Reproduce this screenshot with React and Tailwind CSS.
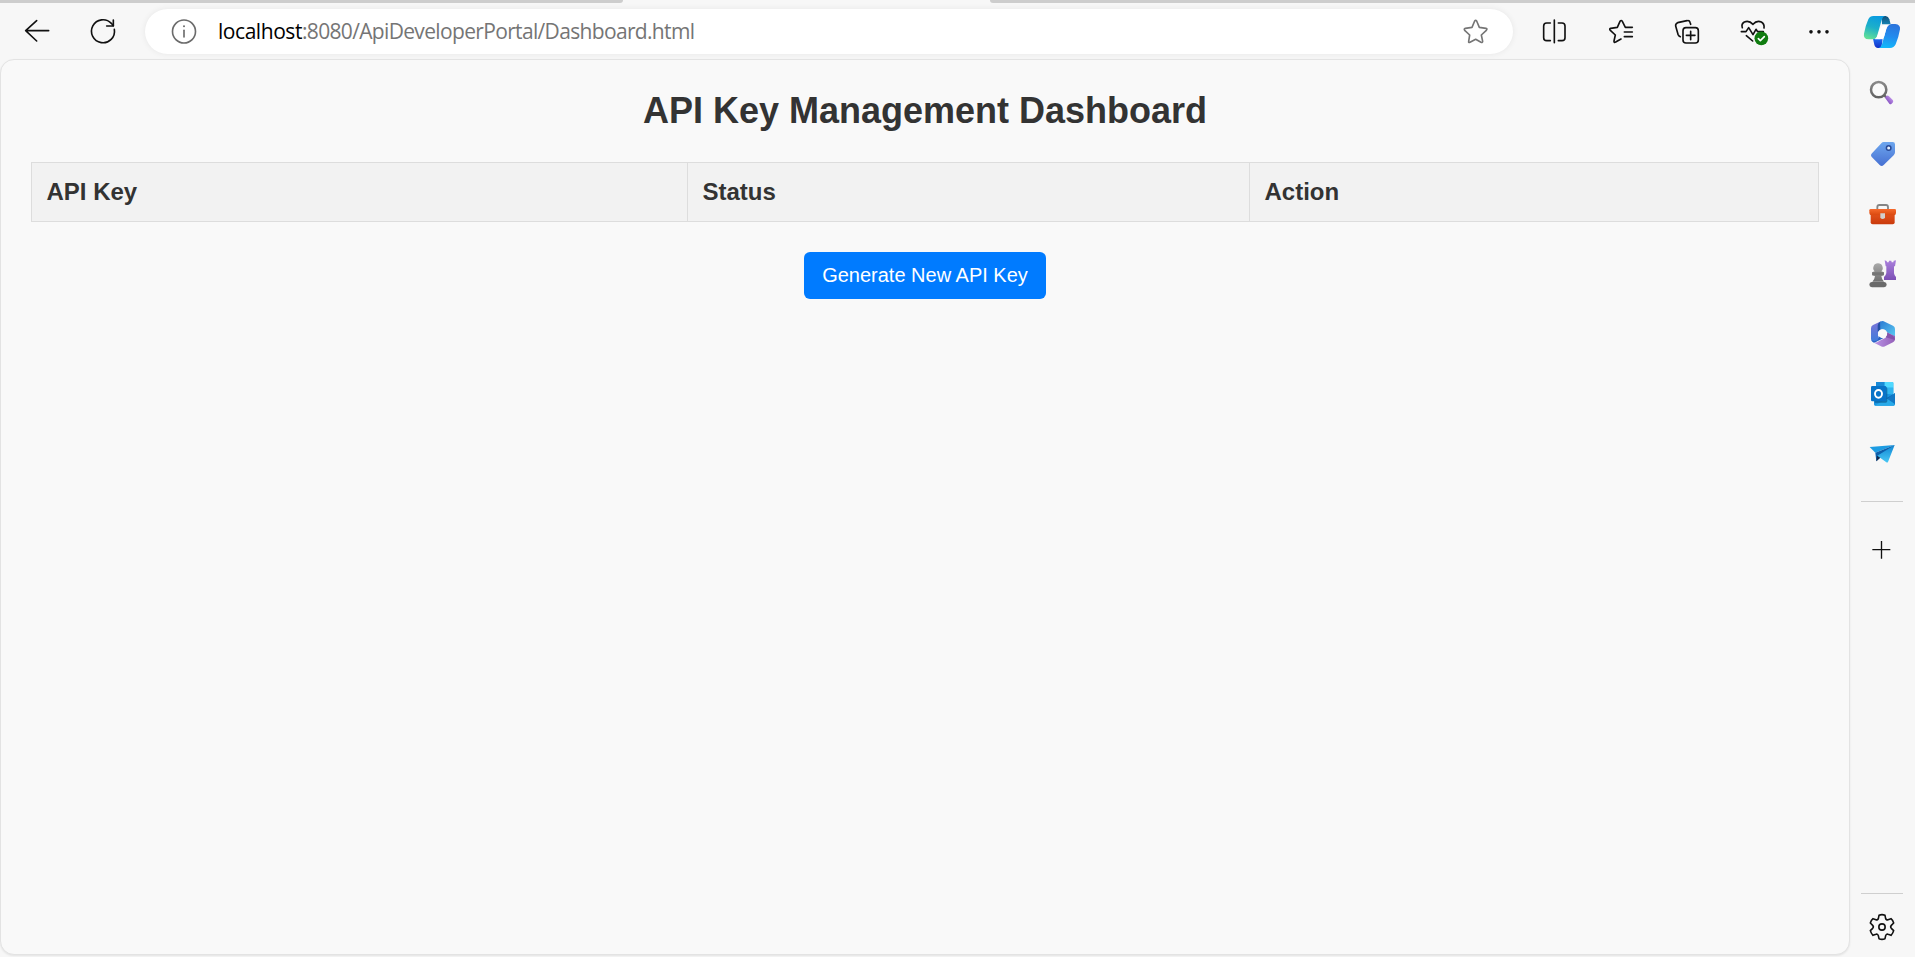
import React from "react";

/* Toolbar glyph: 40x41 box, three drawing units per pixel */
function Tool({ x, children, color = "#111", className = "" }) {
  return (
    <svg
      className={"h-[41px] w-[40px] shrink-0 " + className}
      viewBox={`${x} 33 120 123`}
      fill="none"
      stroke={color}
      strokeWidth="4.9"
      strokeLinecap="round"
      strokeLinejoin="round"
    >
      {children}
    </svg>
  );
}

/* Sidebar glyph: 41x40 box, three drawing units per pixel */
function Side({ y, x = 66, children }) {
  return (
    <svg className="h-[40px] w-[41px] shrink-0" viewBox={`${x} ${y} 123 120`} fill="none">
      {children}
    </svg>
  );
}

function Grad({ id, from, to, x2 = 0, y2 = 1 }) {
  return (
    <linearGradient id={id} x1="0" y1="0" x2={x2} y2={y2}>
      <stop offset="0" stopColor={from} />
      <stop offset="1" stopColor={to} />
    </linearGradient>
  );
}

function Toolbar() {
  return (
    <header className="flex h-[57px] items-center pl-1">
      <div className="flex w-[66px] justify-center">
        <Tool x={51}>
          <path d="M146 92H77M110 62 77 92l33 31" />
        </Tool>
      </div>
      <div className="flex w-[66px] justify-center">
        <Tool x={249}>
          <path d="M343 88A34.5 34.5 0 1 1 334 70L340 77" />
          <path d="M340 60V78H320" />
        </Tool>
      </div>
      <div className="ml-[9px] flex h-[45px] w-[1368px] items-center rounded-full bg-white pr-[18px] pl-[19px] shadow-[0_0_6px_rgba(0,0,0,0.07)]">
        <Tool x={492} color="#6b6b6b">
          <circle cx="552" cy="94.500" r="34.500" />
          <path d="M552 91v20" />
          <circle cx="552" cy="79" r="3" fill="#6b6b6b" stroke="none" />
        </Tool>
        <div className="ml-[14px] pb-px text-[21px] leading-[30px] tracking-[-0.66px] whitespace-nowrap text-[#757575] [font-family:'Open_Sans','Noto_Sans',sans-serif]">
          <span className="tracking-[-0.45px] text-black">localhost</span>:8080/ApiDeveloperPortal/Dashboard.html
        </div>
        <Tool x={105} color="#757575" className="ml-auto">
          <path d="M164 63Q167 59 170 63L178 82 198 85Q203 86 199 91L184 105 188 124Q188 129 183 127L167 118 150 127Q145 129 146 124L149 105 134 91Q131 86 136 85L156 82Z" />
        </Tool>
      </div>
      <nav className="ml-2 flex items-center">
        <div className="flex w-[66px] justify-center">
          <Tool x={342}>
            <path d="M391 69H380Q371 69 371 78V113Q371 122 380 122H391M415 69H426Q435 69 435 78V113Q435 122 426 122H415M403 60V128" />
          </Tool>
        </div>
        <div className="flex w-[66px] justify-center">
          <Tool x={540}>
            <path d="M637 82H616L607 64Q604 59 600 64L592 82 572 85Q567 87 571 91L586 105 582 123Q581 129 587 126L603 117M613 96H637M613 110H637" />
          </Tool>
        </div>
        <div className="flex w-[66px] justify-center">
          <Tool x={738}>
            <rect x="789" y="83" width="46" height="46" rx="9" />
            <path d="M812 94V119M799 106H825M812 73L810 67Q808 60 801 62L773 68Q766 71 767 78L774 103Q776 108 781 110" />
          </Tool>
        </div>
        <div className="flex w-[66px] justify-center">
          <Tool x={936}>
            <path d="M967 83Q963 72 973 66Q987 60 999 73Q1010 60 1024 66Q1034 72 1032 84M964 95H978L986 83 999 104 1008 88 1013 95H1030M979 107L998 123" />
            <circle cx="1024" cy="115" r="20.500" fill="#107c10" stroke="none" />
            <path d="M1015 116l6 6 12-12" stroke="#fff" />
          </Tool>
        </div>
        <div className="flex w-[66px] justify-center">
          <Tool x={1134}>
            <g fill="#111" stroke="none">
              <circle cx="1173" cy="95.500" r="5.400" />
              <circle cx="1197" cy="95.500" r="5.400" />
              <circle cx="1221" cy="95.500" r="5.400" />
            </g>
          </Tool>
        </div>
      </nav>
      <div className="flex w-[64px] justify-center">
        <Tool x={1329}>
          <defs>
            <linearGradient id="cpA" x1="0.6" y1="0" x2="0.3" y2="1">
              <stop offset="0" stopColor="#0a9be0" />
              <stop offset="0.5" stopColor="#1db0c9" />
              <stop offset="1" stopColor="#62e096" />
            </linearGradient>
            <linearGradient id="cpB" x1="0.6" y1="0" x2="0.4" y2="1">
              <stop offset="0" stopColor="#2b74dc" />
              <stop offset="0.5" stopColor="#238bee" />
              <stop offset="1" stopColor="#12b8fa" />
            </linearGradient>
            <Grad id="cpC" from="#124f78" to="#1583b4" />
            <Grad id="cpD" from="#1f6cf0" to="#1430c8" />
          </defs>
          <g stroke="none">
            <path d="M1385 48H1397Q1405 49 1408 58L1412 73H1386Z" fill="url(#cpC)" />
            <path d="M1359 116L1363 134Q1365 143 1374 144H1384L1388 118Z" fill="url(#cpD)" />
            <path d="M1400 72H1426Q1442 74 1440 88Q1436 112 1427 133Q1422 144 1410 144H1376Q1383 142 1386 133L1398 90Q1403 74 1415 72Z" fill="url(#cpB)" />
            <path d="M1360 48H1395Q1388 50 1385 60L1372 106Q1369 118 1358 118H1346Q1329 117 1332 101Q1336 78 1345 58Q1350 48 1360 48Z" fill="url(#cpA)" />
            <path d="M1380 86Q1385 75 1396 75H1402L1393 108Q1390 118 1378 118H1364Q1370 115 1372 108Z" fill="#fff" />
          </g>
        </Tool>
      </div>
    </header>
  );
}

function Sidebar() {
  return (
    <aside className="flex w-[65px] flex-col items-center pt-[5px] pb-[10px]">
      <div className="flex h-[60px] items-center">
        <Side y={42}>
          <defs>
            <Grad id="glass" from="#8a8a8a" to="#626262" />
            <linearGradient id="grip" x1="0.7" y1="0.3" x2="0.3" y2="0.7">
              <stop offset="0" stopColor="#b98be4" />
              <stop offset="1" stopColor="#8a57c4" />
            </linearGradient>
          </defs>
          <path d="M132 105l7 7" stroke="#666" strokeWidth="7" />
          <circle cx="116" cy="89" r="23" fill="#fafafa" stroke="url(#glass)" strokeWidth="7.500" />
          <path d="M136 115Q134 112 137 110L141 107Q144 106 147 109L159 121Q161 125 158 128L154 132Q151 134 148 131Z" fill="url(#grip)" />
        </Side>
      </div>
      <div className="flex h-[60px] items-center">
        <Side y={222}>
          <defs><Grad id="tag" from="#6da6ee" to="#4770d2" /></defs>
          <path d="M131 246H158Q165 246 165 253V277Q165 282 161 286L131 315Q125 321 119 315L96 292Q90 286 96 280L124 250Q127 246 131 246Z" fill="url(#tag)" />
          <circle cx="146" cy="264" r="6.800" fill="#e5f0ff" stroke="#294a96" strokeWidth="4.500" />
        </Side>
      </div>
      <div className="flex h-[60px] items-center">
        <Side y={402}>
          <defs>
            <Grad id="boxTop" from="#f66a2c" to="#d9480f" />
            <Grad id="boxLow" from="#e2521c" to="#c93a0b" />
          </defs>
          <path d="M112 449V441Q112 435 118 435H138Q144 435 144 441V449" stroke="#858585" strokeWidth="5.500" />
          <path d="M92 462H164V487Q164 493 158 493H98Q92 493 92 487Z" fill="url(#boxLow)" />
          <path d="M92 447H164Q168 447 168 451V459Q168 466 161 466H95Q88 466 88 459V451Q88 447 92 447Z" fill="url(#boxTop)" />
          <path d="M121 460H135V472Q135 477 128 477Q121 477 121 472Z" fill="#d2cfcd" />
        </Side>
      </div>
      <div className="flex h-[60px] items-center">
        <Side y={582}>
          <defs>
            <Grad id="pawn" from="#aaa" to="#707070" />
            <Grad id="rook" from="#aa80dc" to="#7c50b4" />
          </defs>
          <path d="M134 601L140 603 141 607H146L147 602H154L155 607H160L161 602 168 601 165 619H162V640Q163 646 168 651V660H132V651Q138 646 139 639V619H137Z" fill="url(#rook)" />
          <path d="M114 610A14 14 0 0 1 124 634L132 637V646L124 648Q125 658 132 665H97Q104 658 105 648L96 646V637L104 634A14 14 0 0 1 114 610Z" fill="url(#pawn)" />
          <path d="M101 637H128Q132 637 132 641T128 646H101Q97 646 97 641T101 637Z" fill="#757575" />
          <path d="M95 666H133Q140 667 140 674T132 682H96Q88 681 88 674T95 666Z" fill="#6a6a6a" />
        </Side>
      </div>
      <div className="flex h-[60px] items-center">
        <Side y={72}>
          <defs>
            <Grad id="mA" from="#7d74d8" to="#3c7ddb" />
            <Grad id="mB" from="#2a78d2" to="#5bcbf3" x2={1} />
            <Grad id="mC" from="#b993e6" to="#9460b8" x2={1} y2={0} />
          </defs>
          <path d="M123 94L99 105Q93 108 93 115V147Q93 155 101 158L114 151V128Q114 121 119 119Z" fill="url(#mA)" />
          <path d="M119 96L124 94Q129 92 134 95L159 107Q165 110 165 117V140L141 127Q135 118 127 118L118 120Z" fill="url(#mB)" />
          <path d="M165 138V148Q165 154 159 157L135 169Q129 172 123 169L102 158Q112 158 119 152L137 143 142 128Z" fill="url(#mC)" />
          <path d="M142 127L158 137Q165 142 165 150L137 142Z" fill="#7a4aa3" opacity="0.75" />
          <path d="M94 151Q98 158 106 157L130 145 116 138 113 150Q104 156 94 151Z" fill="#2b62c4" />
          <path d="M120 96Q113 99 113 107V126L121 119Z" fill="#2450a5" />
          <circle cx="128" cy="131" r="13.500" fill="#f9f9f9" />
        </Side>
      </div>
      <div className="flex h-[60px] items-center">
        <Side y={252}>
          <rect x="108" y="276" width="52" height="46" rx="3" fill="#28a8ea" />
          <path d="M108 276H134V293H108Z" fill="#1a8ad6" />
          <path d="M134 276H157Q160 276 160 279V293H134Z" fill="#50d9ff" />
          <path d="M134 293H160V312H134Z" fill="#2fb4ef" />
          <path d="M102 311H139L160 314 165 309V343Q165 347 161 347H106Q102 347 102 343Z" fill="#1793e0" />
          <path d="M139 325L160 313V320L145 328Z" fill="#0c62ad" />
          <path d="M141 326L165 309V343Z" fill="#1277c4" />
          <path d="M103 347L141 326 164 342Q164 347 160 347Z" fill="#28aae9" />
          <path d="M104 292H138Q142 292 142 296V333Q142 338 137 338H104Z" fill="#075183" opacity="0.6" />
          <rect x="93" y="288" width="46" height="46" rx="4" fill="#0873c8" />
          <ellipse cx="115.500" cy="311.500" rx="10.500" ry="11.500" stroke="#fff" strokeWidth="5.800" />
        </Side>
      </div>
      <div className="flex h-[60px] items-center">
        <Side y={432}>
          <defs><Grad id="wing" from="#0f86d4" to="#48c7f4" /></defs>
          <path d="M89 471L164 465 106 488Z" fill="#1d9ce2" />
          <path d="M106 488L164 465 122 502 109 514Z" fill="#0d5eaa" />
          <path d="M109 514L111 498 124 500Z" fill="#12294d" />
          <path d="M164 465L144 516Q142 519 138 516L112 497Z" fill="url(#wing)" />
        </Side>
      </div>
      <div className="mt-[17px] ml-[11px] h-px w-[42px] shrink-0 self-start bg-[#cfcfcf]" />
      <div className="mt-[28px] flex">
        <Side y={720}>
          <path d="M97 779H151M124.500 753V806" stroke="#111" strokeWidth="4" />
        </Side>
      </div>
      <div className="mt-auto ml-[11px] h-px w-[42px] shrink-0 self-start bg-[#cfcfcf]" />
      <div className="mt-[13px] flex">
        <Side y={141} x={186}>
          <path
            d="M237 166Q246 162 255 166L257 176Q259 181 264 179L273 176Q279 181 281 189L274 196Q270 200 274 205L281 212Q279 220 273 226L264 223Q259 221 257 227L255 236Q246 240 237 236L235 227Q233 221 228 223L219 226Q213 220 211 212L218 205Q222 200 218 196L211 189Q213 181 219 176L228 179Q233 181 235 176Z"
            stroke="#111"
            strokeWidth="4.800"
            strokeLinejoin="round"
          />
          <circle cx="246" cy="201" r="9.500" stroke="#111" strokeWidth="4.800" />
        </Side>
      </div>
    </aside>
  );
}

function Dashboard() {
  return (
    <main className="mb-[2px] w-[1850px] rounded-[14px] border border-[#e3e3e3] bg-[#f9f9f9] px-[30px] pt-[30px] text-[#333] shadow-[0_1px_2px_rgba(0,0,0,0.08)]">
      <h1 className="text-center text-[36px] leading-[41px] font-bold">API Key Management Dashboard</h1>
      <div className="mt-[31px] grid h-[60px] grid-cols-[656px_562px_1fr] divide-x divide-[#ddd] border border-[#ddd] bg-[#f2f2f2] text-2xl leading-[28px] font-bold">
        <div className="px-[14.5px] py-[15px]">API Key</div>
        <div className="px-[14.5px] py-[15px]">Status</div>
        <div className="px-[14.5px] py-[15px]">Action</div>
      </div>
      <div className="mt-[30px] flex justify-center">
        <button className="h-[47px] rounded-[6px] bg-[#007bff] px-[18px] text-[20px] leading-[23px] text-white">
          Generate New API Key
        </button>
      </div>
    </main>
  );
}

export default function App() {
  return (
    <div className="flex h-[957px] w-[1915px] flex-col overflow-hidden bg-[#f7f7f7] [font-family:'Liberation_Sans',Arial,sans-serif]">
      <div className="flex h-[3px] shrink-0 justify-between">
        <div className="w-[623px] rounded-br-[3px] bg-[#cdcdcd]" />
        <div className="w-[925px] rounded-bl-[3px] bg-[#cdcdcd]" />
      </div>
      <Toolbar />
      <div className="-mt-px flex min-h-0 flex-1">
        <Dashboard />
        <Sidebar />
      </div>
    </div>
  );
}
